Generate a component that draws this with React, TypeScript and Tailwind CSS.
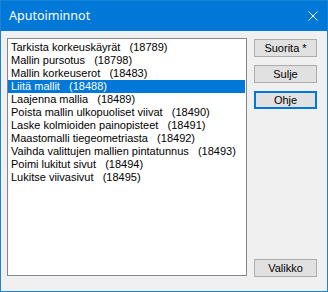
import React from "react";

const ITEMS = [
  "Tarkista korkeuskäyrät   (18789)",
  "Mallin pursotus   (18798)",
  "Mallin korkeuserot   (18483)",
  "Liitä mallit   (18488)",
  "Laajenna mallia   (18489)",
  "Poista mallin ulkopuoliset viivat   (18490)",
  "Laske kolmioiden painopisteet   (18491)",
  "Maastomalli tiegeometriasta   (18492)",
  "Vaihda valittujen mallien pintatunnus   (18493)",
  "Poimi lukitut sivut   (18494)",
  "Lukitse viivasivut   (18495)",
];

const SELECTED = 3;

function Button({ label, focused }: { label: string; focused?: boolean }) {
  return (
    <button
      className={`w-[63px] h-[18px] bg-[#e1e1e1] text-[11px] leading-none text-black flex items-center justify-center ${
        focused ? "border-2 border-[#0078d7]" : "border border-[#adadad]"
      }`}
    >
      {label}
    </button>
  );
}

export default function App() {
  return (
    <div
      className="w-[328px] h-[292px] flex flex-col border border-[#1883d7] bg-[#f0f0f0]"
      style={{ fontFamily: '"Liberation Sans", Arial, sans-serif' }}
    >
      {/* otsikkopalkki */}
      <div className="h-[30px] bg-[#0078d7] flex items-center justify-between pl-[8px] pr-[9px] shrink-0">
        <span
          className="text-white text-[12.5px]"
          style={{ fontFamily: '"Noto Sans", "Open Sans", sans-serif' }}
        >
          Aputoiminnot
        </span>
        <svg width="10" height="10" viewBox="0 0 10 10">
          <path d="M0.5 0.5L9.5 9.5M9.5 0.5L0.5 9.5" stroke="white" strokeWidth="1" />
        </svg>
      </div>

      <div className="flex flex-1 pt-[7px] pl-[6px] pr-[9px] pb-[14px] gap-[7px]">
        {/* lista */}
        <div className="w-[240px] h-[238px] bg-white border border-[#828790] pt-[2px] pr-[1px]">
          {ITEMS.map((it, i) => (
            <div
              key={i}
              className={`h-[13px] leading-[13px] text-[11px] pl-[3px] whitespace-pre ${
                i === SELECTED ? "bg-[#0078d7] text-white" : "text-black"
              }`}
            >
              {it}
            </div>
          ))}
        </div>

        {/* painikkeet */}
        <div className="flex flex-col flex-1 pt-[1px]">
          <div className="flex flex-col gap-[8px]">
            <Button label="Suorita *" />
            <Button label="Sulje" />
            <Button label="Ohje" focused />
          </div>
          <div className="mt-auto">
            <Button label="Valikko" />
          </div>
        </div>
      </div>
    </div>
  );
}
